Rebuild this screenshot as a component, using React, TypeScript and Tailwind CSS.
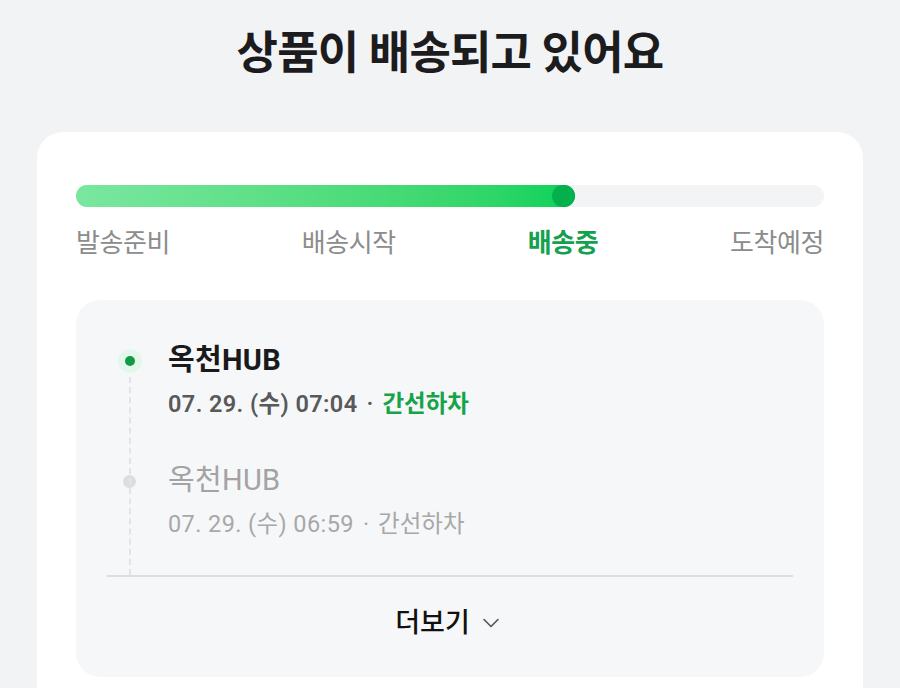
import { ChevronDown } from "lucide-react";

const steps = ["발송준비", "배송시작", "배송중", "도착예정"];
const activeStep = 2;

const events = [
  { place: "옥천HUB", time: "07. 29. (수) 07:04", status: "간선하차", current: true },
  { place: "옥천HUB", time: "07. 29. (수) 06:59", status: "간선하차", current: false },
];

function TimelineItem({ place, time, status, current }: (typeof events)[number]) {
  return (
    <div className="flex">
      <div className="flex w-[61px] shrink-0 justify-start pl-[11px] pt-[9px]">
        {current ? (
          <div className="flex h-[24px] w-[24px] items-center justify-center rounded-full bg-[#e3f8ea]">
            <div className="h-[10px] w-[10px] rounded-full bg-[#119a45]" />
          </div>
        ) : (
          <div className="ml-[5px] mt-[6px] h-[13px] w-[13px] rounded-full bg-[#dcdde0]" />
        )}
      </div>
      <div className="flex flex-col">
        <div
          className={
            current
              ? "text-[29px] font-bold leading-[40px] tracking-[0.3px] text-[#1a1a1a]"
              : "text-[29px] font-normal leading-[40px] tracking-[0.3px] text-[#a3a3a3]"
          }
        >
          {place}
        </div>
        <div
          className={
            current
              ? "mt-[9px] text-[23.5px] font-semibold leading-[30px] text-[#595959]"
              : "mt-[9px] text-[23.5px] font-normal leading-[30px] text-[#a8a8a8]"
          }
        >
          <span className="tracking-[0.4px]">{time}</span>
          <span className="mx-[9px]">·</span>
          <span className={current ? "text-[#17a34a]" : ""}>{status}</span>
        </div>
      </div>
    </div>
  );
}

export default function App() {
  return (
    <div
      className="h-[688px] overflow-hidden bg-[#f2f3f5]"
      style={{ fontFamily: 'Roboto, "Noto Sans CJK KR", sans-serif' }}
    >
      <h1 className="pt-[22px] text-center text-[45px] font-bold leading-[64px] tracking-[-0.8px] text-[#1c1c1e]">
        상품이 배송되고 있어요
      </h1>

      <div className="mx-[37px] mt-[46px] h-[600px] rounded-[26px] bg-white px-[39px] pt-[53px]">
        {/* progress */}
        <div className="relative h-[22px] rounded-full bg-[#f3f4f6]">
          <div className="h-full w-[499px] rounded-full bg-gradient-to-r from-[#7ae7a0] to-[#00d25a]" />
          <div className="absolute left-[476px] top-0 h-[22px] w-[23px] rounded-full bg-[#04b04c]" />
        </div>
        <div className="mt-[19px] flex justify-between">
          {steps.map((s, i) => (
            <span
              key={s}
              className={
                i === activeStep
                  ? "text-[26px] font-bold leading-[34px] tracking-[-0.4px] text-[#13a14f]"
                  : "text-[26px] font-normal leading-[34px] tracking-[-0.4px] text-[#8c8c8c]"
              }
            >
              {s}
            </span>
          ))}
        </div>

        {/* history */}
        <div className="mt-[40px] h-[377px] rounded-[24px] bg-[#f6f7f9] px-[31px] pt-[40px]">
          <div className="relative">
            <div className="absolute bottom-0 left-[22px] top-[37px] border-l-2 border-dashed border-[#e3e4e7]" />
            <div className="flex flex-col gap-[41px] pb-[36px]">
              {events.map((e, i) => (
                <TimelineItem key={i} {...e} />
              ))}
            </div>
          </div>
          <div className="h-[2px] bg-[#dddee1]" />
          <div className="flex items-center justify-center pt-[29px]">
            <span className="text-[27px] font-medium leading-[34px] text-[#111111]">더보기</span>
            <ChevronDown className="ml-[7px] h-[28px] w-[28px] text-[#555555]" strokeWidth={1.4} />
          </div>
        </div>
      </div>
    </div>
  );
}
